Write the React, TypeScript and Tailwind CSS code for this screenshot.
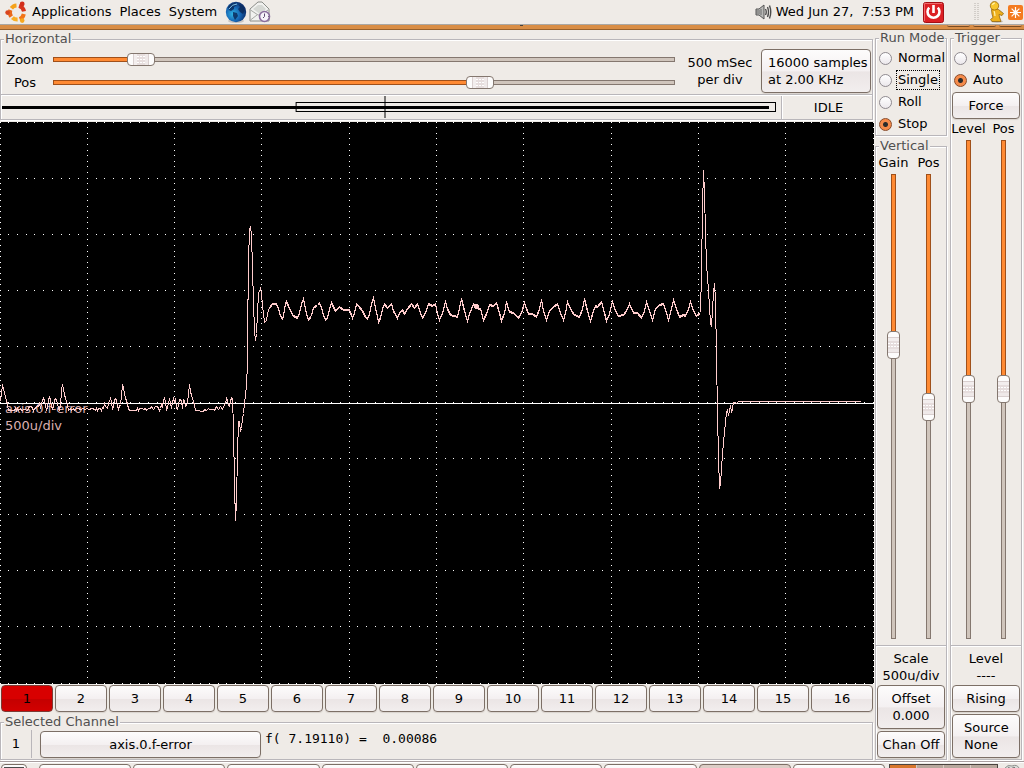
import React, { useState } from "react";

const etched =
  "min-w-0 border border-[#b9b6ba] shadow-[1px_1px_0_#fff,inset_1px_1px_0_#fff]";
const legendClass = "ml-[3px] h-4 bg-[#efebe7] px-px leading-4 text-[#505050]";
const buttonClass =
  "whitespace-nowrap rounded-[4px] border border-[#7c6f66] bg-[linear-gradient(#fdfcfc,#f4f0f1_50%,#ebe5e5_52%,#f2eeee)] text-center leading-[17px] text-black shadow-[0_1px_1px_#d8d2cd]";

const thumbX =
  "[&::-webkit-slider-thumb]:h-[13px] [&::-webkit-slider-thumb]:w-7 [&::-webkit-slider-thumb]:appearance-none [&::-webkit-slider-thumb]:rounded-[4px] [&::-webkit-slider-thumb]:border [&::-webkit-slider-thumb]:border-[#84776f] [&::-webkit-slider-thumb]:bg-[linear-gradient(to_right,#fdfcfc_5px,#d9cfcf_5px,#d9cfcf_6px,#f3eeee_6px,#f3eeee_9px,transparent_9px,transparent_17px,#efe9e9_17px,#efe9e9_20px,#d9cfcf_20px,#d9cfcf_21px,#fdfcfc_21px),conic-gradient(from_180deg_at_2px_2px,#fff_90deg,#e6dddd_0)] [&::-webkit-slider-thumb]:[background-size:auto,3px_3px]";
const thumbY =
  "[&::-webkit-slider-thumb]:h-7 [&::-webkit-slider-thumb]:w-[13px] [&::-webkit-slider-thumb]:appearance-none [&::-webkit-slider-thumb]:rounded-[4px] [&::-webkit-slider-thumb]:border [&::-webkit-slider-thumb]:border-[#84776f] [&::-webkit-slider-thumb]:bg-[linear-gradient(#fdfcfc_5px,#d9cfcf_5px,#d9cfcf_6px,#f3eeee_6px,#f3eeee_9px,transparent_9px,transparent_17px,#efe9e9_17px,#efe9e9_20px,#d9cfcf_20px,#d9cfcf_21px,#fdfcfc_21px),conic-gradient(from_180deg_at_2px_2px,#fff_90deg,#e6dddd_0)] [&::-webkit-slider-thumb]:[background-size:auto,3px_3px]";

type SliderProps = { label: string; initial: number; vertical?: boolean };

const Slider = ({ label, initial, vertical }: SliderProps) => {
  const [value, setValue] = useState(initial);
  const dir = vertical ? "to bottom" : "to right";
  const pct = `${value / 10}%`;
  const inner = vertical ? "3px calc(100% - 2px)" : "calc(100% - 2px) 3px";
  const outer = vertical ? "5px 100%" : "100% 5px";

  return (
    <input
      type="range"
      aria-label={label}
      min={0}
      max={1000}
      value={value}
      onChange={(e) => setValue(Number(e.target.value))}
      className={
        vertical
          ? `m-0 h-full w-[13px] appearance-none [writing-mode:vertical-lr] ${thumbY}`
          : `m-0 h-[13px] w-full appearance-none ${thumbX}`
      }
      style={{
        background: `linear-gradient(${dir}, #ff8a33 ${pct}, #d0c5bc ${pct}) center / ${inner} no-repeat, linear-gradient(${dir}, #a0501a ${pct}, #84776f ${pct}) center / ${outer} no-repeat`,
      }}
    />
  );
};

type RadioProps = {
  name: string;
  label: string;
  checked?: boolean;
  focused?: boolean;
};

const Radio = ({ name, label, checked, focused }: RadioProps) => (
  <label className="flex h-[22px] items-center gap-1 pl-[3px]">
    <input
      type="radio"
      name={name}
      defaultChecked={checked}
      className="h-[13px] w-[13px] shrink-0 appearance-none rounded-full border border-[#8f8a90] bg-[linear-gradient(#fff,#ece8ec)] checked:border-[#8a4a28] checked:bg-[radial-gradient(circle,#2b2b2b_2px,#f58b4b_3px)]"
    />
    <span
      className={
        focused
          ? "border border-dotted border-black px-px leading-[18px]"
          : "border border-transparent px-px leading-[18px]"
      }
    >
      {label}
    </span>
  </label>
);

const Rule = () => (
  <div className="h-[2px] shrink-0 border-t border-[#b9b6ba] bg-white" />
);

/* ================= PANEL ICONS ================= */

const UbuntuLogo = () => (
  <svg width="22" height="22" viewBox="0 0 22 22" className="shrink-0">
    <g fill="none" strokeWidth="4">
      <path d="M6.4 7.2A7 7 0 0 1 11.5 4.4" stroke="#f5a21b" />
      <path d="M6.2 15.6A7 7 0 0 1 5.4 9" stroke="#e9681a" />
      <path d="M14 4.8A7 7 0 0 1 19 10.4" stroke="#d7341c" />
      <path d="M18.8 13A7 7 0 0 1 14.6 18" stroke="#f2741a" />
      <path d="M12.6 18.6A7 7 0 0 1 7.4 16.6" stroke="#f7ae25" />
    </g>
    <circle cx="2.6" cy="11.6" r="2.3" fill="#d9441f" />
    <circle cx="17.2" cy="3" r="2.4" fill="#d22d1a" />
    <circle cx="17.2" cy="19.6" r="2.3" fill="#f6a821" />
  </svg>
);

const Globe = () => (
  <svg width="22" height="22" viewBox="0 0 22 22" className="shrink-0">
    <defs>
      <radialGradient id="sea" cx="0.35" cy="0.6" r="0.7">
        <stop offset="0" stopColor="#2fb4e4" />
        <stop offset="0.5" stopColor="#1767b5" />
        <stop offset="1" stopColor="#0a2560" />
      </radialGradient>
    </defs>
    <ellipse cx="11" cy="20" rx="8" ry="2" fill="#c9c5c2" />
    <circle cx="11" cy="11" r="10.2" fill="url(#sea)" />
    <path
      d="M3 6Q6 2 10 2L12 4 9 6 9 8 6 10 4 9ZM13 3L18 5 20 9 18 13 15 11 13 8 15 6ZM8 11L12 12 13 15 10 19 8 15Z"
      fill="#0b2a5c"
      opacity="0.85"
    />
    <path d="M4 8Q7 3 12 3" stroke="#7fc4ea" fill="none" />
  </svg>
);

const MailIcon = () => (
  <svg width="22" height="22" viewBox="0 0 22 22" className="shrink-0">
    <path
      d="M1 8L9 1H13L20 8V20H1Z"
      fill="#f1f1ef"
      stroke="#8b8d89"
      strokeLinejoin="round"
    />
    <path d="M4 8L9 4H13L17 8 11 13Z" fill="#d6d8d4" />
    <path d="M1.5 9L9 14H12L19 9M1.5 19L8 14" fill="none" stroke="#a5a7a3" />
    <circle cx="15.5" cy="15.5" r="5" fill="#f6f3fa" stroke="#8a6d9d" strokeWidth="1.6" />
    <path d="M15.5 12.5V15.5L14 17M19 15.5h.8" stroke="#5d4b6d" fill="none" />
  </svg>
);

const Speaker = () => (
  <svg width="17" height="16" viewBox="0 0 17 16" className="shrink-0">
    <path d="M1 5H4L9 1V15L4 11H1Z" fill="#b9b9b7" stroke="#555" />
    <path d="M2 6V10M4 6V10M6 5V11" stroke="#6b6b6b" />
    <path
      d="M10.5 5Q12 8 10.5 11M12.5 3Q14.5 8 12.5 13M14.5 1.5Q17 8 14.5 14.5"
      fill="none"
      stroke="#4c4c4c"
      strokeWidth="1.4"
    />
  </svg>
);

const PowerIcon = () => (
  <svg width="21" height="21" viewBox="0 0 21 21" className="shrink-0">
    <rect x="0.5" y="0.5" width="20" height="20" rx="2" fill="#dc1f24" stroke="#a30f14" />
    <path d="M1.5 19V1.5H19" fill="none" stroke="#f0696b" />
    <path
      d="M6.2 5.6A6 6 0 1 0 14.8 5.6"
      fill="none"
      stroke="#fff"
      strokeWidth="2.6"
    />
    <path d="M10.5 3V11" stroke="#fff" strokeWidth="2.6" />
  </svg>
);

const RunningMan = () => (
  <svg width="16" height="22" viewBox="0 0 16 22" className="shrink-0">
    <ellipse cx="9" cy="20.5" rx="6" ry="1.4" fill="#c6c1bb" />
    <path
      d="M3.500 8.500Q7 7 10.500 8.500L15.500 12.500 14 14.500 11 13.500 11.500 16 13 20.500H4L2.500 18.500 5 16.500 4 13Z"
      fill="#eeb01c"
      stroke="#94660c"
      strokeWidth="0.8"
      strokeLinejoin="round"
    />
    <circle cx="6.5" cy="4.8" r="4.2" fill="#f7c52c" stroke="#94660c" strokeWidth="0.8" />
    <path d="M4.5 4Q5 2 7 2M6 10Q7 12 7 15" stroke="#fff3b0" fill="none" strokeWidth="1.2" />
  </svg>
);

const Burst = () => (
  <svg width="15" height="15" viewBox="0 0 15 15" className="shrink-0">
    <rect width="15" height="15" rx="2" fill="#f47b20" />
    <path
      d="M7.5 2V13M2 7.5H13M3.6 3.6L11.4 11.4M11.4 3.6L3.6 11.4"
      stroke="#fff"
      strokeWidth="1.2"
    />
    <circle cx="7.5" cy="7.5" r="2.2" fill="#fff" />
  </svg>
);

const Grip = () => (
  <svg width="6" height="18" viewBox="0 0 6 18" className="shrink-0">
    <path d="M1 0V18M4 0V18" stroke="#b5b0ab" strokeDasharray="1 1" />
  </svg>
);

/* ================= SCOPE DISPLAY ================= */

// 10 x 10 divisions, ten dots per division along every line
const gridDots = () => {
  let d = "";
  for (let line = 0; line <= 10; line++) {
    for (let dot = 0; dot <= 100; dot++) {
      d += `M${Math.floor(dot * 8.73)} ${Math.floor(line * 56.1)}h1`;
      d += `M${Math.floor(line * 87.3)} ${Math.floor(dot * 5.61)}h1`;
    }
  }
  return d;
};

// x,y pairs, y measured down from the channel's zero line
const trace = `0,-2 2,-19 4,-10 6,-3 7,1 8,7 14,7 15,5 16,7 17,5 18,7 20,5 21,7 24,6 27,7 29,3 31,3
33,7 34,5 36,4 37,2 38,3 39,0 40,5 41,0 42,-3 43,-5 44,-3 45,2 46,7 47,3 48,-4 49,-6 50,-4 51,2 52,6
53,2 54,-3 55,-5 56,-4 57,1 58,4 59,6 60,2 61,-13 62,-19 63,-14 64,-9 65,-5 66,-2 67,1 68,7
70,5 71,7 73,5 74,7 76,5 78,5 80,6 83,5 84,6 87,5 88,6 92,5 94,6 95,7 96,5 97,7 98,5 100,5 101,7
102,4 103,5 104,0 105,3 107,5 108,0 110,-5 111,-2 112,6 113,2 114,-3 115,-5 116,-4 117,2 118,6 119,3
120,1 121,-7 122,-19 123,-15 125,-5 126,-3 127,1 128,5 129,7 136,7 137,5 138,7 139,5 142,5 143,6
145,5 146,7 148,5 150,5 151,3 153,6 155,3 157,3 159,7 160,5 161,1 162,3 163,-3 164,-5 165,-2 166,6
167,4 169,-5 170,-1 171,5 172,-1 173,-5 174,-2 175,-5 176,5 177,6 179,-4 181,-3 182,5 183,-4 184,-3
185,3 187,0 188,-10 189,-19 190,-12 191,-8 193,-2 194,2 195,7 203,8 204,6 206,7 208,5 209,6 213,6
214,7 216,3 218,6 220,3 222,6 224,1 225,0 226,-5 227,-3 228,2 229,3 230,-2 231,-6 232,-5 233,24
234,82 235,117 236,98 237,50 238,18 239,18 240,28 241,25 242,15 243,10 244,0 245,-8 246,-18 247,-40
247,-63 248,-143 249,-173 250,-177 251,-168 252,-136 253,-100 254,-73 255,-63 256,-70 257,-90
258,-110 260,-115 261,-110 262,-98 263,-90 264,-81 266,-83 267,-90 269,-96 272,-100 276,-100 278,-95
280,-88 282,-85 283,-88 285,-100 286,-102 288,-98 291,-91 293,-88 297,-86 299,-91 301,-100 303,-105
304,-100 306,-90 308,-84 311,-88 313,-96 317,-99 319,-101 321,-96 323,-89 325,-84 327,-86 329,-95
331,-101 333,-97 335,-93 339,-97 343,-94 349,-94 352,-86 354,-91 356,-100 358,-98 362,-93 365,-87
367,-85 369,-90 371,-100 373,-106 375,-96 377,-88 378,-82 380,-86 382,-95 384,-100 387,-96 391,-100
393,-93 397,-86 399,-91 402,-94 404,-90 407,-95 411,-100 414,-96 417,-100 420,-91 422,-86 425,-91
428,-100 432,-98 435,-100 437,-90 439,-84 442,-91 445,-102 447,-95 450,-89 457,-87 459,-96 461,-105
464,-93 467,-83 469,-90 473,-100 476,-96 480,-95 483,-84 486,-90 489,-99 493,-98 496,-101 499,-91
501,-83 504,-91 506,-102 509,-92 513,-91 518,-86 521,-91 524,-101 528,-90 532,-90 536,-87 539,-95
541,-104 543,-93 546,-84 549,-93 553,-97 557,-100 560,-91 563,-84 565,-91 567,-102 571,-93 574,-89
579,-87 582,-95 584,-105 587,-93 590,-83 593,-93 595,-98 597,-97 601,-102 604,-91 606,-83 609,-90
612,-102 615,-93 618,-88 623,-89 626,-93 629,-100 633,-91 637,-91 641,-86 644,-93 646,-102 649,-93
652,-84 655,-95 659,-99 663,-100 666,-91 668,-84 671,-95 673,-104 676,-95 679,-87 683,-89 685,-88
688,-95 690,-102 693,-93 696,-88 700,-91 701,-131 702,-196 703,-233 704,-210 705,-171 706,-139
707,-126 708,-113 709,-97 710,-80 711,-77 712,-93 713,-111 714,-120 715,-103 716,-47 717,10 718,54
719,85 720,80 721,65 722,50 723,39 724,28 726,9 727,6 728,12 730,2 731,9 732,5 733,-1 735,-1 736,0
738,-2 860,-2`;

// the stretch where the sample noise thickens the line
const plateau = trace.slice(trace.indexOf("269,-96"), trace.indexOf("701,-131"));

const Display = () => (
  <div className="relative min-h-0 flex-1 bg-black">
    <div className="absolute top-[278px] left-[5px] leading-[17px] text-[#dcb0b0]">
      <p>axis.0.f-error</p>
      <p>500u/div</p>
    </div>
    <svg
      viewBox="0 0 874 562"
      preserveAspectRatio="none"
      className="absolute inset-0 h-full w-full"
      shapeRendering="crispEdges"
      fill="none"
    >
      <g transform="translate(0 0.5)">
        <path d={gridDots()} stroke="#fff" />
        <path d="M0 281H874" stroke="#fff" />
      </g>
      <g transform="translate(0.5 281.5)" stroke="#ffcccc">
        <polyline points={trace} />
        <polyline points={plateau} transform="translate(0 1)" />
        <circle cx="476" cy="-97" r="2" fill="#ffcccc" />
      </g>
    </svg>
  </div>
);

const RecordBar = () => (
  <svg
    viewBox="0 0 781 23"
    preserveAspectRatio="none"
    className="h-[23px] min-w-0 flex-1"
    shapeRendering="crispEdges"
    fill="none"
    stroke="#000"
  >
    <rect x="295.5" y="6.5" width="480" height="9" />
    <path d="M1 11.5H769" strokeWidth="3" />
    <path d="M384.5 0V22" />
  </svg>
);

/* ================= DESKTOP PANELS ================= */

const TopPanel = () => (
  <header className="flex h-6 shrink-0 items-center justify-between pr-px pl-[5px]">
    <nav className="flex items-center">
      <UbuntuLogo />
      <div className="flex pl-px">
        <button className="px-1">Applications</button>
        <button className="px-1">Places</button>
        <button className="px-1">System</button>
      </div>
      <button aria-label="Web browser" className="ml-1">
        <Globe />
      </button>
      <button aria-label="Mail" className="ml-[2px]">
        <MailIcon />
      </button>
    </nav>
    <div className="flex items-center">
      <Speaker />
      <span className="pr-[9px] pl-1 whitespace-pre">
        {"Wed Jun 27,  7:53 PM"}
      </span>
      <button aria-label="Log out" className="mr-[30px]">
        <PowerIcon />
      </button>
      <Grip />
      <span className="ml-2">
        <RunningMan />
      </span>
      <span className="ml-1">
        <Burst />
      </span>
    </div>
  </header>
);

// only the lower edge of the window's title bar shows under the panel
const TitleEdge = () => (
  <div className="flex h-[6px] shrink-0 items-start justify-between border-t border-b border-t-[#aaa7a3] border-b-[#96602c] bg-[#d98d45] pr-[2px]">
    <div className="w-[23px]" />
    <div className="h-px w-[3px] bg-[#4a4038]" />
    <div className="-ml-[72px] flex gap-[3px]">
      {["min", "max", "close"].map((name) => (
        <div
          key={name}
          className="h-[2px] w-[23px] rounded-b-[2px] border-b border-[#7a4c22] bg-[#e0a06a]"
        />
      ))}
    </div>
  </div>
);

const tasks = [0, 1, 2, 3, 4, 5, 6, 7, 8];

const TaskBar = () => (
  <footer className="flex h-[7px] shrink-0 gap-[2px] overflow-hidden border-t border-[#a99fa0] pt-[2px] pl-px shadow-[inset_0_1px_0_#fff]">
    <button
      aria-label="Show desktop"
      className={`${buttonClass} h-6 w-[26px] shrink-0 px-[2px] pt-[2px]`}
    >
      <div className="h-5 bg-[#4b4b4b]" />
    </button>
    <div className="w-[8px] shrink-0" />
    {tasks.map((i) => (
      <button
        key={i}
        aria-label={`Window ${i + 1}`}
        className={
          i === 7
            ? "h-6 min-w-0 flex-1 rounded-[4px] border border-[#7c6f66] bg-[#dccdc6]"
            : `${buttonClass} h-6 min-w-0 flex-1`
        }
      />
    ))}
    <div className="ml-[2px] grid h-6 w-[109px] shrink-0 grid-cols-4 gap-px border border-[#4b443f] bg-[#d8cdc5]">
      <div className="bg-[#d8762c]" />
      <div className="bg-[#b8a89d]" />
      <div className="bg-[#b8a89d]" />
      <div className="bg-[#b8a89d]" />
    </div>
    <svg width="24" height="24" viewBox="0 0 24 24" className="shrink-0">
      <path d="M5 4Q8 0 12 2Q17 0 19 4L17 20H7Z" fill="#d9dbd8" stroke="#8f918d" />
      <path d="M8 3L11 5 14 3 16 5" fill="none" stroke="#777" />
    </svg>
  </footer>
);

/* ================= SCOPE CONTROLS ================= */

const Horizontal = () => (
  <fieldset className={`${etched} mt-px mr-px mb-[2px] shrink-0`}>
    <legend className={legendClass}>Horizontal</legend>
    <div className="flex h-[47px] items-center pr-px">
      <div className="grid flex-1 grid-cols-[48px_1fr] items-center gap-x-1 pt-px text-center leading-[23px]">
        <span>Zoom</span>
        <div className="flex">
          <Slider label="Zoom" initial={125} />
        </div>
        <span>Pos</span>
        <div className="flex">
          <Slider label="Horizontal position" initial={695} />
        </div>
      </div>
      <div className="w-[86px] pl-1 text-center leading-[17px] whitespace-nowrap">
        <p>500 mSec</p>
        <p>per div</p>
      </div>
      <button className={`${buttonClass} h-11 w-[110px] pl-[6px] text-left`}>
        16000 samples
        <br />
        at 2.00 KHz
      </button>
    </div>
    <Rule />
    <div className="flex h-[23px] items-center">
      <RecordBar />
      <div className="h-[23px] w-[91px] border-l border-[#b9b6ba] pl-[3px] text-center leading-[23px] shadow-[inset_1px_0_0_#fff]">
        IDLE
      </div>
    </div>
  </fieldset>
);

const channels = Array.from({ length: 16 }, (_, i) => i + 1);

const Channels = () => (
  <div className="flex h-[30px] shrink-0 gap-[2px] pt-px pr-px pb-[2px] pl-px">
    {channels.map((n) => (
      <button
        key={n}
        className={
          n === 1
            ? "w-[52px] rounded-[4px] border border-[#7c3a34] bg-[linear-gradient(#d80000_50%,#c40000_52%,#d20000)]"
            : n === 16
              ? `${buttonClass} flex-1`
              : `${buttonClass} w-[52px]`
        }
      >
        {n}
      </button>
    ))}
  </div>
);

const SelectedChannel = () => (
  <fieldset className={`${etched} mr-px h-[46px] shrink-0`}>
    <legend className={legendClass}>Selected Channel</legend>
    <div className="flex h-[28px] items-start">
      <span className="h-7 w-[31px] border-r border-[#b9b6ba] text-center leading-7">
        1
      </span>
      <button className={`${buttonClass} mt-px ml-2 h-[27px] w-[221px]`}>
        axis.0.f-error
      </button>
      <output className="ml-1 font-['DejaVu_Sans_Mono',monospace] leading-[18px] whitespace-pre">
        {"f( 7.19110) =  0.00086"}
      </output>
    </div>
  </fieldset>
);

const SliderPair = ({ left, right }: { left: SliderProps; right: SliderProps }) => (
  <>
    <div className="grid h-[18px] shrink-0 grid-cols-2 text-center leading-[18px]">
      <span>{left.label}</span>
      <span>{right.label}</span>
    </div>
    <div className="grid min-h-0 flex-1 grid-cols-2 justify-items-center pt-[2px] pb-[6px]">
      <Slider {...left} vertical />
      <Slider {...right} vertical />
    </div>
    <Rule />
  </>
);

const RunAndVertical = () => (
  <div className="ml-px flex w-[72px] shrink-0 flex-col">
    <fieldset className={`${etched} mb-[2px] shrink-0`}>
      <legend className={legendClass}>Run Mode</legend>
      <div className="pt-px">
        <Radio name="run" label="Normal" />
        <Radio name="run" label="Single" focused />
        <Radio name="run" label="Roll" />
        <Radio name="run" label="Stop" checked />
      </div>
    </fieldset>
    <fieldset className={`${etched} flex min-h-0 flex-1 flex-col`}>
      <legend className={legendClass}>Vertical</legend>
      <SliderPair
        left={{ label: "Gain", initial: 360 }}
        right={{ label: "Pos", initial: 500 }}
      />
      <div className="pt-[3px] pb-px text-center leading-[17px] whitespace-nowrap">
        <p>Scale</p>
        <p>500u/div</p>
      </div>
      <div className="flex flex-col gap-[2px] px-px pb-px">
        <button className={`${buttonClass} h-11`}>
          Offset
          <br />
          0.000
        </button>
        <button className={`${buttonClass} h-[27px]`}>Chan Off</button>
      </div>
    </fieldset>
  </div>
);

const Trigger = () => (
  <fieldset className={`${etched} ml-[3px] flex w-[72px] shrink-0 flex-col`}>
    <legend className={legendClass}>Trigger</legend>
    <div className="pt-px">
      <Radio name="trigger" label="Normal" />
      <Radio name="trigger" label="Auto" checked />
    </div>
    <div className="flex flex-col px-px pt-px pb-px">
      <button className={`${buttonClass} h-[27px]`}>Force</button>
    </div>
    <SliderPair
      left={{ label: "Level", initial: 499 }}
      right={{ label: "Pos", initial: 499 }}
    />
    <div className="pt-[3px] pb-px text-center leading-[17px]">
      <p>Level</p>
      <p>----</p>
    </div>
    <div className="flex flex-col gap-[2px] px-px pb-px">
      <button className={`${buttonClass} h-[27px]`}>Rising</button>
      <button className={`${buttonClass} h-11 pl-[11px] text-left`}>
        Source
        <br />
        None
      </button>
    </div>
  </fieldset>
);

const App = () => {
  return (
    <div className="flex h-screen flex-col overflow-hidden bg-[#efebe7] font-['DejaVu_Sans',sans-serif] text-[13px] leading-4 text-black">
      <TopPanel />
      <TitleEdge />
      <main className="flex min-h-0 flex-1 pr-[2px] pb-px">
        <div className="flex min-w-0 flex-1 flex-col">
          <Horizontal />
          <Display />
          <Channels />
          <SelectedChannel />
        </div>
        <RunAndVertical />
        <Trigger />
      </main>
      <TaskBar />
    </div>
  );
};

export default App;
